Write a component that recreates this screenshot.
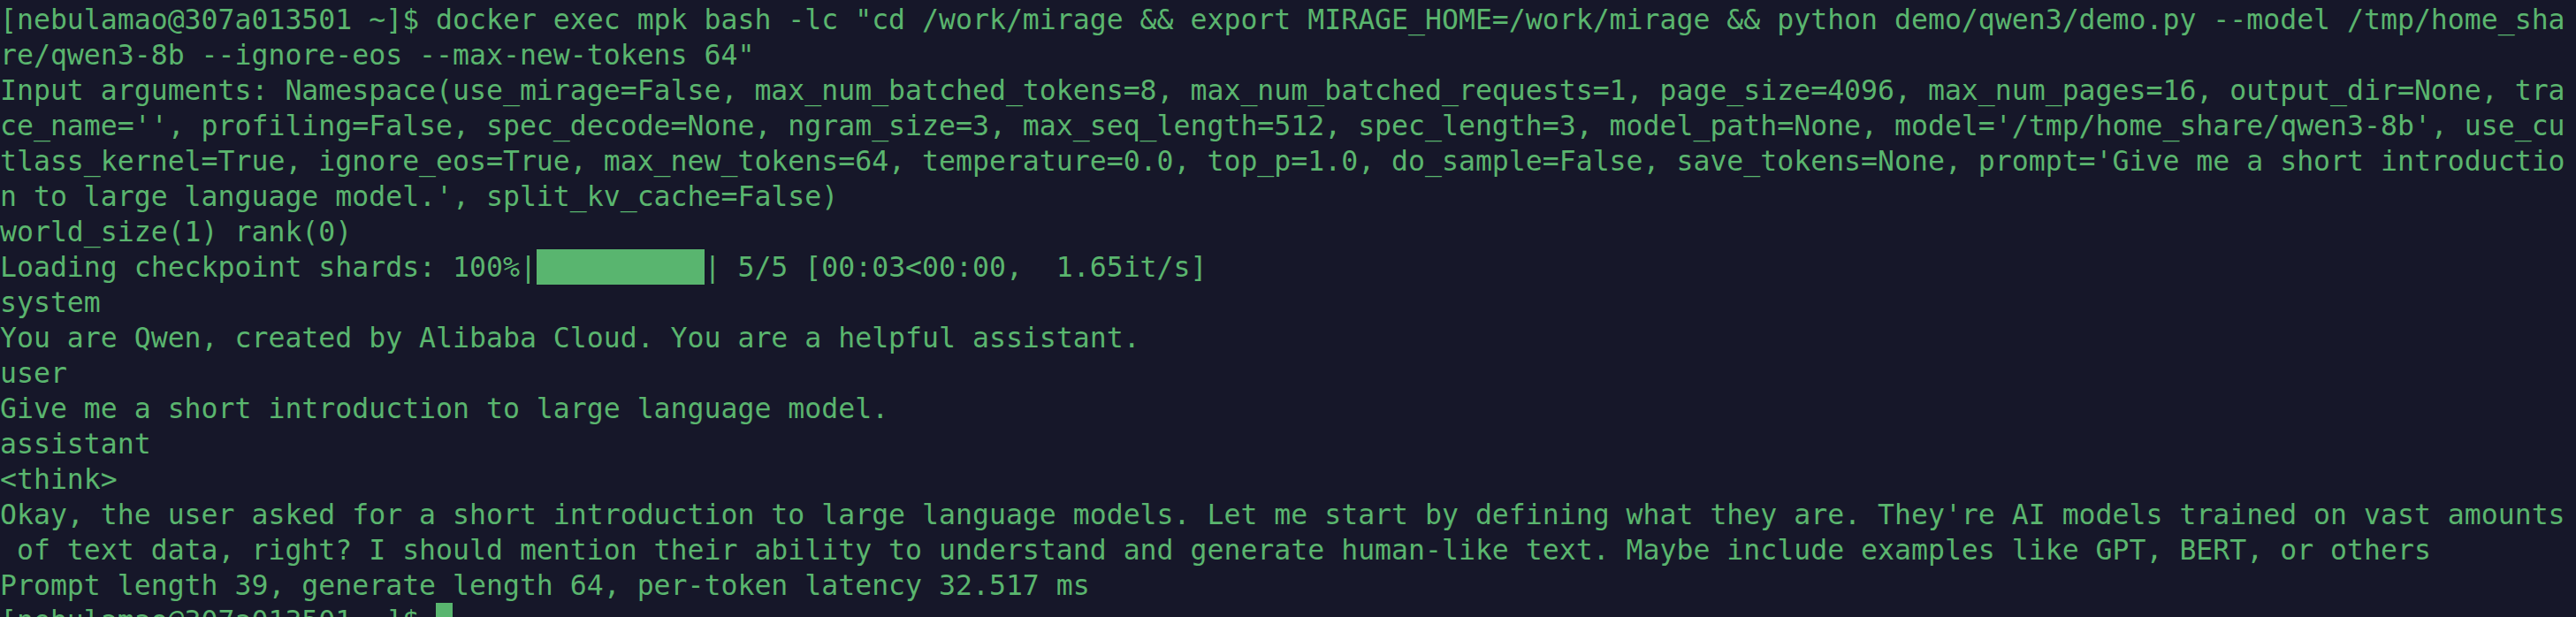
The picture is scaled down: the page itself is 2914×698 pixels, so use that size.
import React from 'react';

// Terminal session output, one entry per visual (already wrapped) row
const lines = [
  '[nebulamao@307a013501 ~]$ docker exec mpk bash -lc "cd /work/mirage && export MIRAGE_HOME=/work/mirage && python demo/qwen3/demo.py --model /tmp/home_sha',
  're/qwen3-8b --ignore-eos --max-new-tokens 64"',
  'Input arguments: Namespace(use_mirage=False, max_num_batched_tokens=8, max_num_batched_requests=1, page_size=4096, max_num_pages=16, output_dir=None, tra',
  "ce_name='', profiling=False, spec_decode=None, ngram_size=3, max_seq_length=512, spec_length=3, model_path=None, model='/tmp/home_share/qwen3-8b', use_cu",
  "tlass_kernel=True, ignore_eos=True, max_new_tokens=64, temperature=0.0, top_p=1.0, do_sample=False, save_tokens=None, prompt='Give me a short introductio",
  "n to large language model.', split_kv_cache=False)",
  'world_size(1) rank(0)',
  'PROGRESS',
  'system',
  'You are Qwen, created by Alibaba Cloud. You are a helpful assistant.',
  'user',
  'Give me a short introduction to large language model.',
  'assistant',
  '<think>',
  "Okay, the user asked for a short introduction to large language models. Let me start by defining what they are. They're AI models trained on vast amounts",
  ' of text data, right? I should mention their ability to understand and generate human-like text. Maybe include examples like GPT, BERT, or others',
  'Prompt length 39, generate length 64, per-token latency 32.517 ms',
  'PROMPT',
];

function Row({ text }) {
  if (text === 'PROGRESS') {
    return (
      <div className="h-[40px] whitespace-pre">
        <span>Loading checkpoint shards: 100%|</span>
        <span className="inline-block h-[40px] w-[10ch] bg-[#59b56f] align-top" />
        <span>| 5/5 [00:03&lt;00:00,  1.65it/s]</span>
      </div>
    );
  }
  if (text === 'PROMPT') {
    return (
      <div className="h-[40px] whitespace-pre">
        <span>[nebulamao@307a013501 ~]$ </span>
        <span className="inline-block h-[40px] w-[1ch] bg-[#59b56f] align-top" />
      </div>
    );
  }
  return <div className="h-[40px] whitespace-pre">{text}</div>;
}

export default function App() {
  return (
    <div
      className="w-[2914px] h-[698px] overflow-hidden bg-[#161729] pt-[2px] text-[31.5px] leading-[40px] text-[#5ab56e]"
      style={{ fontFamily: '"DejaVu Sans Mono", "Liberation Mono", monospace' }}
    >
      {lines.map((t, i) => (
        <Row key={i} text={t} />
      ))}
    </div>
  );
}
